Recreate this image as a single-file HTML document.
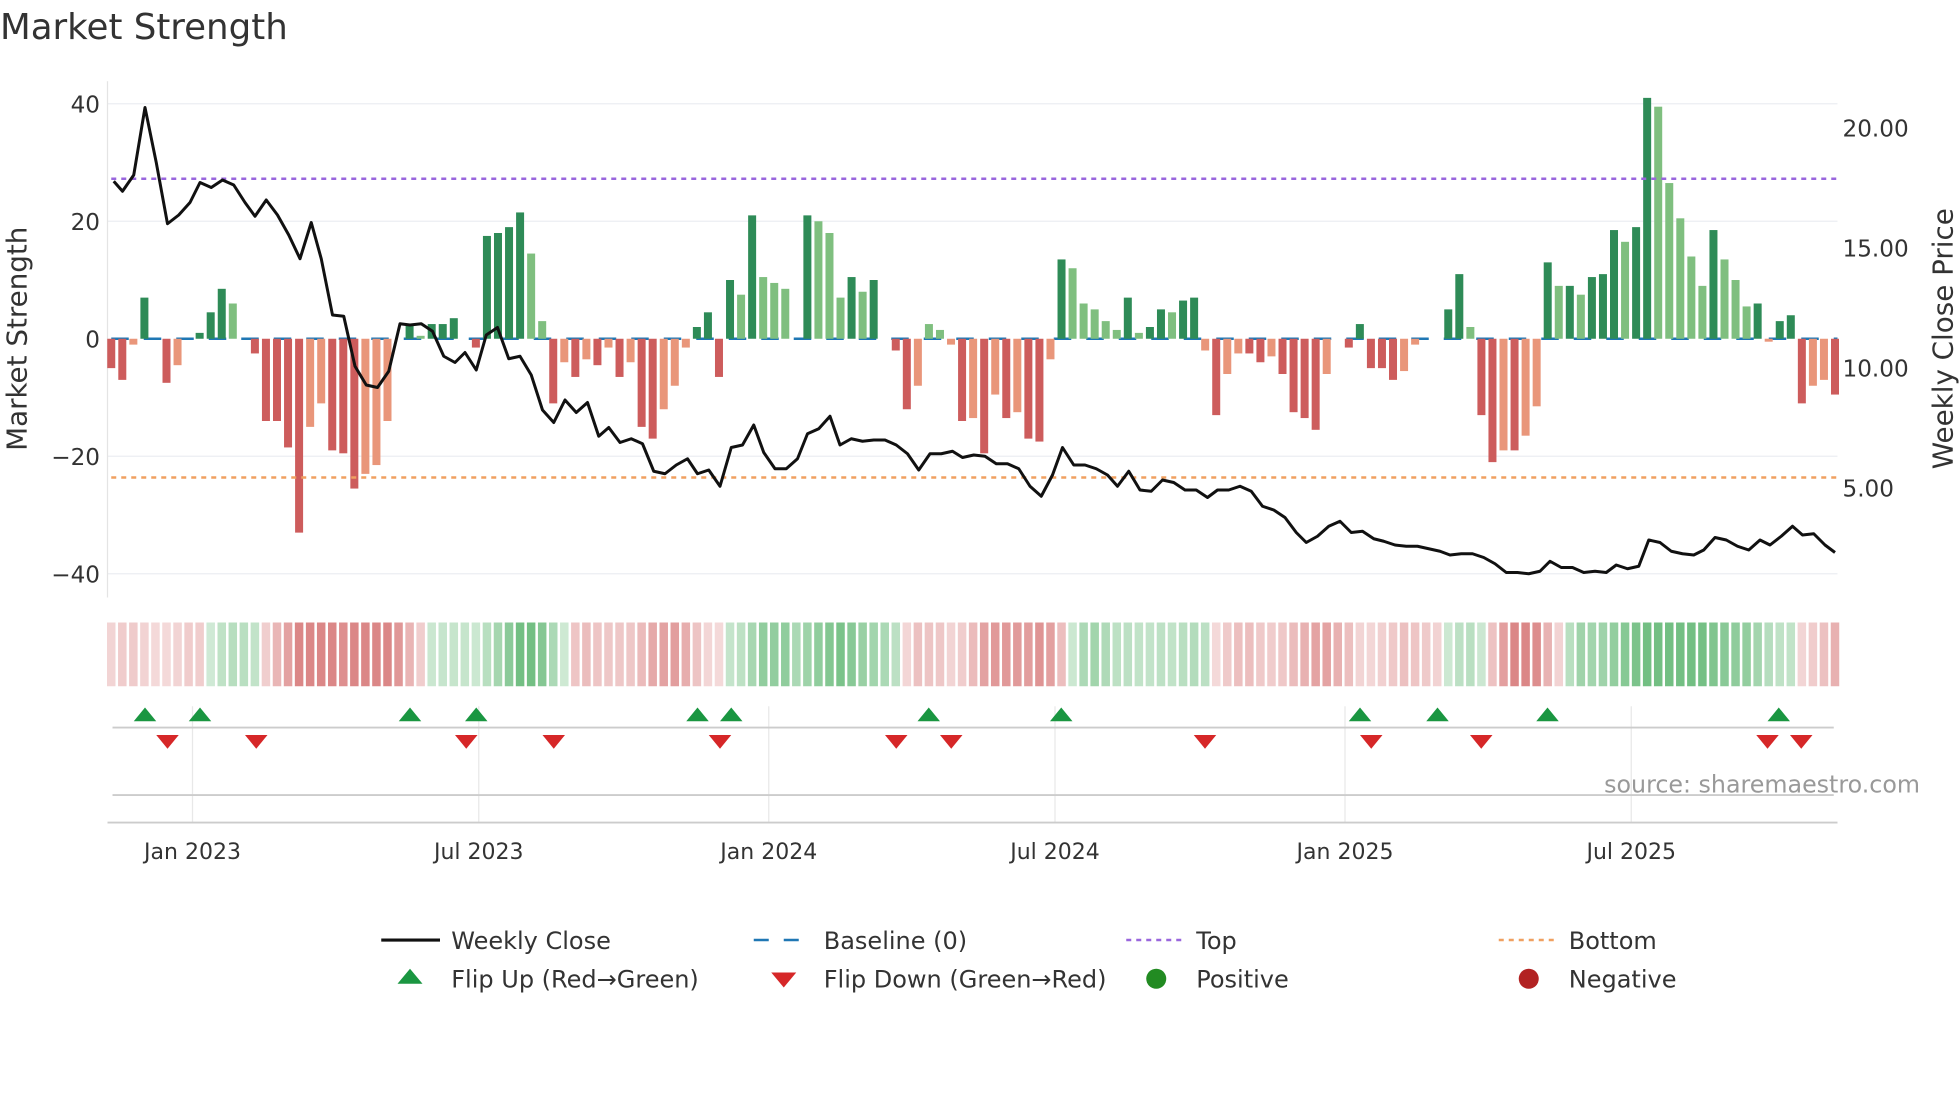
<!DOCTYPE html>
<html><head><meta charset="utf-8"><style>
html,body{margin:0;padding:0;background:#fff;}
svg{display:block;font-family:"DejaVu Sans","Liberation Sans",sans-serif;}
</style></head><body>
<svg id="s" width="1960" height="1102" viewBox="0 0 1568 881.6" xmlns="http://www.w3.org/2000/svg">
<rect width="1568" height="882" fill="#fff"/>
<text x="0" y="31" font-size="28.5" fill="#333">Market Strength</text>
<g stroke="#eceef2" stroke-width="1">
<line x1="86" y1="83" x2="1470" y2="83"/><line x1="86" y1="177" x2="1470" y2="177"/>
<line x1="86" y1="365" x2="1470" y2="365"/><line x1="86" y1="459" x2="1470" y2="459"/>
</g>
<line x1="86" y1="65" x2="86" y2="478" stroke="#e4e4e4"/>
<g font-size="18.5" fill="#333" text-anchor="end">
<text x="80" y="90">40</text><text x="80" y="184">20</text><text x="80" y="278">0</text>
<text x="80" y="372">−20</text><text x="80" y="466">−40</text></g>
<g font-size="18.5" fill="#333">
<text x="1474" y="109">20.00</text><text x="1474" y="205">15.00</text>
<text x="1474" y="301">10.00</text><text x="1474" y="397">5.00</text></g>
<text transform="translate(21,271) rotate(-90)" font-size="22.2" fill="#333" text-anchor="middle">Market Strength</text>
<text transform="translate(1562,271) rotate(-90)" font-size="22.2" fill="#333" text-anchor="middle">Weekly Close Price</text>
<g id="bars"></g>
<line x1="89" y1="143" x2="1470" y2="143" stroke="#9966dd" stroke-width="2" stroke-dasharray="4,4"/>
<line x1="89" y1="382" x2="1470" y2="382" stroke="#f0a060" stroke-width="2" stroke-dasharray="4,4"/>
<polyline id="price" fill="none" stroke="#111" stroke-width="2.4" stroke-linejoin="round"/>
<g id="strip"></g>
<g stroke="#e8e8e8"><line x1="154" y1="565" x2="154" y2="658"/><line x1="383" y1="565" x2="383" y2="658"/><line x1="615" y1="565" x2="615" y2="658"/><line x1="844" y1="565" x2="844" y2="658"/><line x1="1076" y1="565" x2="1076" y2="658"/><line x1="1305" y1="565" x2="1305" y2="658"/></g>
<line x1="90" y1="582" x2="1467" y2="582" stroke="#ccc" stroke-width="1.5"/>
<line x1="90" y1="636" x2="1467" y2="636" stroke="#ccc" stroke-width="1.5"/>
<line x1="86" y1="658" x2="1470" y2="658" stroke="#ccc" stroke-width="1.5"/>
<g id="marks"></g>
<text x="1536" y="634" font-size="19" fill="#999" text-anchor="end">source: sharemaestro.com</text>
<g font-size="17.6" fill="#333" text-anchor="middle">
<text x="154" y="687">Jan 2023</text><text x="383" y="687">Jul 2023</text><text x="615" y="687">Jan 2024</text>
<text x="844" y="687">Jul 2024</text><text x="1076" y="687">Jan 2025</text><text x="1305" y="687">Jul 2025</text></g>
<g font-size="19.2" fill="#333">
<line x1="305" y1="752" x2="352" y2="752" stroke="#111" stroke-width="2.5"/><text x="361" y="759">Weekly Close</text>
<line x1="603" y1="752" x2="647" y2="752" stroke="#1f77b4" stroke-width="2" stroke-dasharray="12,12"/><text x="659" y="759">Baseline (0)</text>
<line x1="901" y1="752" x2="945" y2="752" stroke="#9966dd" stroke-width="2" stroke-dasharray="4,4"/><text x="957" y="759">Top</text>
<line x1="1199" y1="752" x2="1243" y2="752" stroke="#f0a060" stroke-width="2" stroke-dasharray="4,4"/><text x="1255" y="759">Bottom</text>
<polygon points="328,775 338,787 318,787" fill="#1a9641"/><text x="361" y="790">Flip Up (Red→Green)</text>
<polygon points="617,778 637,778 627,790" fill="#d62728"/><text x="659" y="790">Flip Down (Green→Red)</text>
<circle cx="925" cy="783" r="8" fill="#228b22"/><text x="957" y="790">Positive</text>
<circle cx="1223" cy="783" r="8" fill="#b22222"/><text x="1255" y="790">Negative</text>
</g>
</svg>
<script>
var V=[-5,-7,-1,7,0,-7.5,-4.5,0,1,4.5,8.5,6,0,-2.5,-14,-14,-18.5,-33,-15,-11,-19,-19.5,-25.5,-23,-21.5,-14,0,2.5,0.5,2.5,2.5,3.5,0,-1.5,17.5,18,19,21.5,14.5,3,-11,-4,-6.5,-3.5,-4.5,-1.5,-6.5,-4,-15,-17,-12,-8,-1.5,2,4.5,-6.5,10,7.5,21,10.5,9.5,8.5,0,21,20,18,7,10.5,8,10,0,-2,-12,-8,2.5,1.5,-1,-14,-13.5,-19.5,-9.5,-13.5,-12.5,-17,-17.5,-3.5,13.5,12,6,5,3,1.5,7,1,2,5,4.5,6.5,7,-2,-13,-6,-2.5,-2.5,-4,-3,-6,-12.5,-13.5,-15.5,-6,0,-1.5,2.5,-5,-5,-7,-5.5,-1,0,0,5,11,2,-13,-21,-19,-19,-16.5,-11.5,13,9,9,7.5,10.5,11,18.5,16.5,19,41,39.5,26.5,20.5,14,9,18.5,13.5,10,5.5,6,-0.5,3,4,-11,-8,-7,-9.5];
var n=V.length,x0=89,x1=1468,st=(x1-x0)/(n-1),h="";
h+='<line x1="89" y1="271" x2="1470" y2="271" stroke="#1f77b4" stroke-width="2" stroke-dasharray="14,12"/>';
for(var i=0;i<n;i++){var v=V[i],x=x0+i*st,p=i?Math.abs(V[i-1]):0,light=Math.abs(v)<p;
 var c=v>=0?(light?"#7fbf7f":"#2e8b57"):(light?"#e9967a":"#cd5c5c");
 if(v==0)continue;var y=271-v*4.7;h+='<rect x="'+(x-3.2)+'" y="'+Math.min(y,271)+'" width="6.4" height="'+Math.abs(v*4.7)+'" fill="'+c+'"/>';}
document.getElementById("bars").innerHTML=h;
h="";for(i=0;i<n;i++){var s=0;for(var k=Math.max(0,i-3);k<=i;k++)s+=V[k];s/=4;var a=Math.min(1,Math.abs(s)/18);
 var c=s>=0?'rgba(46,160,70,'+(0.22+0.45*a)+')':'rgba(200,70,70,'+(0.2+0.45*a)+')';
 h+='<rect x="'+(x0+i*st-3.4)+'" y="498" width="6.8" height="51" fill="'+c+'"/>';}
document.getElementById("strip").innerHTML=h;
var P=[[91,145],[98,153],[107,140],[116,86],[125,130],[134,179],[143,172],[152,162],[160,146],[169,150],[178,144],[187,148],[196,162],[204,173],[213,160],[222,172],[231,188],[240,207],[249,178],[257,207],[266,252],[275,253],[284,293],[293,308],[302,310],[311,297],[320,259],[328,260],[337,259],[346,265],[355,285],[364,290],[372,282],[381,296],[389,268],[398,262],[407,287],[416,285],[425,300],[434,328],[443,338],[452,320],[461,330],[470,322],[479,349],[487,342],[496,354],[505,351],[514,355],[523,377],[532,379],[541,372],[550,367],[558,379],[567,376],[576,389],[585,358],[594,356],[603,340],[611,362],[620,375],[629,375],[638,367],[646,347],[655,343],[664,333],[672,356],[681,351],[690,353],[699,352],[708,352],[717,356],[726,363],[735,376],[744,363],[753,363],[762,361],[770,366],[779,364],[788,365],[797,371],[806,371],[815,375],[824,389],[833,397],[842,380],[850,358],[859,372],[868,372],[877,375],[886,380],[894,389],[903,377],[912,392],[921,393],[930,384],[939,386],[948,392],[957,392],[966,398],[974,392],[983,392],[992,389],[1001,393],[1010,405],[1019,408],[1028,414],[1037,426],[1045,434],[1054,429],[1063,421],[1072,417],[1081,426],[1090,425],[1099,431],[1107,433],[1116,436],[1125,437],[1134,437],[1143,439],[1152,441],[1160,444],[1169,443],[1178,443],[1187,446],[1196,451],[1205,458],[1214,458],[1223,459],[1232,457],[1240,449],[1249,454],[1258,454],[1267,458],[1276,457],[1285,458],[1293,452],[1302,455],[1311,453],[1319,432],[1328,434],[1337,441],[1346,443],[1355,444],[1363,440],[1372,430],[1381,432],[1390,437],[1399,440],[1408,432],[1416,436],[1425,429],[1434,421],[1442,428],[1451,427],[1460,436],[1468,442]];
document.getElementById("price").setAttribute("points",P.map(function(p){return p.join(",")}).join(" "));
var U=[116,160,328,381,558,585,743,849,1088,1150,1238,1423],D=[134,205,373,443,576,717,761,964,1097,1185,1414,1441];h="";
U.forEach(function(x){h+='<polygon points="'+x+',566 '+(x+9)+',577 '+(x-9)+',577" fill="#1a9641"/>';});
D.forEach(function(x){h+='<polygon points="'+(x-9)+',588 '+(x+9)+',588 '+x+',599" fill="#d62728"/>';});
document.getElementById("marks").innerHTML=h;
</script>
</body></html>
